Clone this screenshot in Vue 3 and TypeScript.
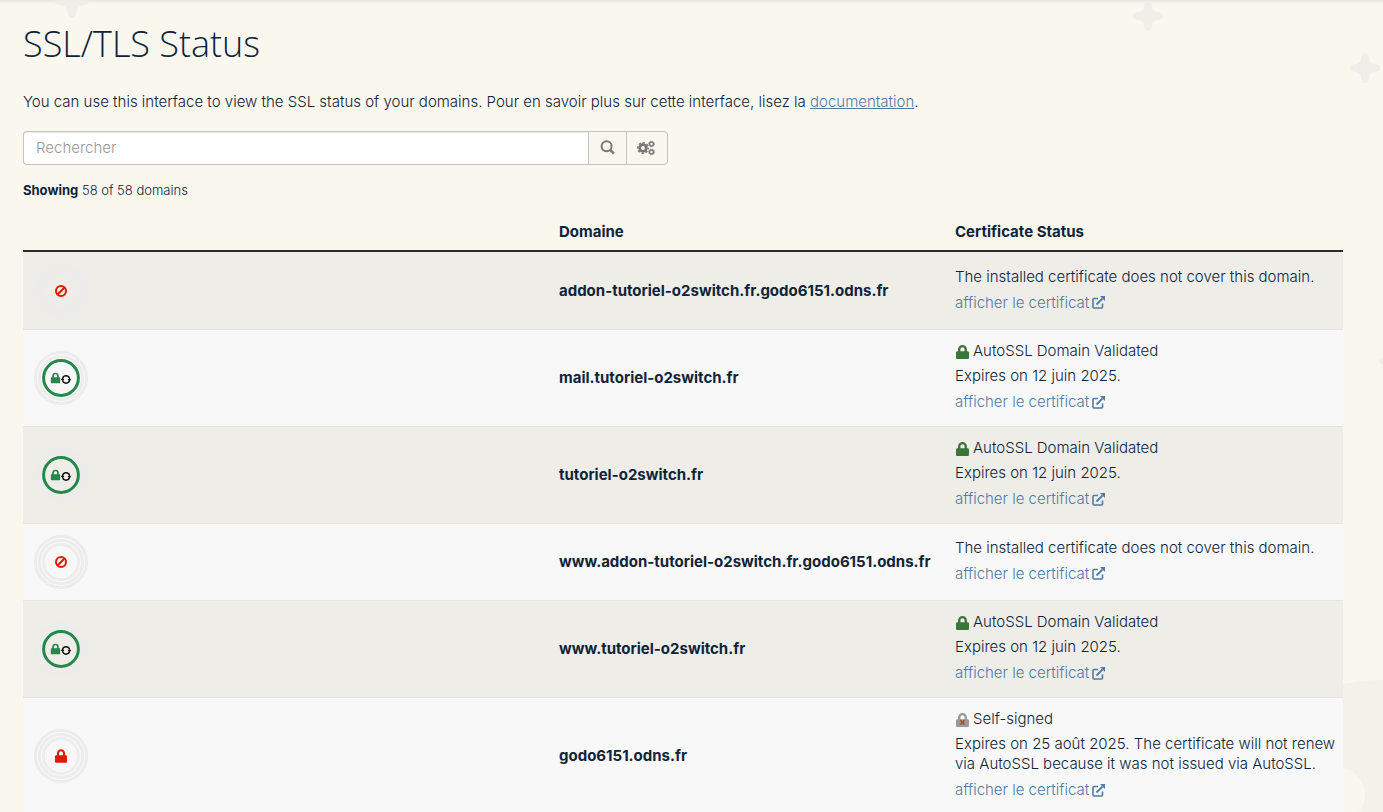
<script setup lang="ts">
import { ref } from 'vue'

type Badge = 'ban' | 'auto' | 'lock'
type Status = 'none' | 'valid' | 'self'

interface DomainRow {
  name: string
  badge: Badge
  status: Status
  title?: string
  detail: string
}

const validated = {
  badge: 'auto' as Badge,
  status: 'valid' as Status,
  title: 'AutoSSL Domain Validated',
  detail: 'Expires on 12 juin 2025.',
}
const uncovered = {
  badge: 'ban' as Badge,
  status: 'none' as Status,
  detail: 'The installed certificate does not cover this domain.',
}

const rows: DomainRow[] = [
  { name: 'addon-tutoriel-o2switch.fr.godo6151.odns.fr', ...uncovered },
  { name: 'mail.tutoriel-o2switch.fr', ...validated },
  { name: 'tutoriel-o2switch.fr', ...validated },
  { name: 'www.addon-tutoriel-o2switch.fr.godo6151.odns.fr', ...uncovered },
  { name: 'www.tutoriel-o2switch.fr', ...validated },
  {
    name: 'godo6151.odns.fr',
    badge: 'lock',
    status: 'self',
    title: 'Self-signed',
    detail:
      'Expires on 25 août 2025. The certificate will not renew via AutoSSL because it was not issued via AutoSSL.',
  },
]

const query = ref('')

const lockPath =
  'M400 224h-24v-72C376 68.2 307.8 0 224 0S72 68.2 72 152v72H48c-26.5 0-48 21.5-48 48v192c0 26.5 21.5 48 48 48h352c26.5 0 48-21.5 48-48V272c0-26.5-21.5-48-48-48zm-104 0H152v-72c0-39.7 32.3-72 72-72s72 32.3 72 72v72z'
const starPath =
  'M15 0C18 0 19 3 19 6C20 9 21 10 24 11C27 11 30 12 30 15C30 18 27 19 24 19C21 20 20 21 19 24C19 27 18 30 15 30C12 30 11 27 11 24C10 21 9 20 6 19C3 19 0 18 0 15C0 12 3 11 6 11C9 10 10 9 11 6C11 3 12 0 15 0Z'
</script>

<template>
  <div class="page">
    <div class="decor" aria-hidden="true">
      <svg class="star star-a" viewBox="0 0 30 30"><path :d="starPath" /></svg>
      <svg class="star star-b" viewBox="0 0 30 30"><path :d="starPath" /></svg>
      <svg class="star star-c" viewBox="0 0 30 30"><path :d="starPath" /></svg>
      <svg class="star star-d" viewBox="0 0 30 30"><path :d="starPath" /></svg>
      <svg class="hill" viewBox="0 0 60 134">
        <path d="M0 5Q30 0 60 0V134H0Z" fill="#f4f1ea" />
        <circle cx="-6" cy="116" r="28" fill="#faf7ef" />
      </svg>
    </div>

    <main class="content">
      <h1>SSL/TLS Status</h1>
      <p class="intro">
        You can use this interface to view the SSL status of your domains. Pour en savoir plus sur cette
        interface, lisez la <a href="#documentation">documentation</a>.
      </p>

      <form class="search" role="search" @submit.prevent>
        <input v-model="query" type="text" placeholder="Rechercher" aria-label="Rechercher" />
        <button type="submit" class="find" aria-label="Lancer la recherche">
          <svg width="16" height="16" viewBox="0 0 16 16" fill="none" stroke="#777" stroke-width="2">
            <circle cx="6.6" cy="6.2" r="5" />
            <path d="M10.2 9.8L14 13.6" stroke-width="2.4" />
          </svg>
        </button>
        <button type="button" class="options" aria-label="Options">
          <svg width="18" height="16" viewBox="0 0 18 16" fill="none" stroke="#777">
            <circle cx="6" cy="8" r="3.3" stroke-width="2.8" />
            <circle cx="6" cy="8" r="5.2" stroke-width="1.6" stroke-dasharray="2.3 1.784" stroke-dashoffset="1" />
            <circle cx="14.5" cy="4" r="2" stroke-width="1.5" />
            <circle cx="14.5" cy="4" r="2.9" stroke-width="0.7" stroke-dasharray="1.2 1.08" />
            <circle cx="14.5" cy="12" r="2" stroke-width="1.5" />
            <circle cx="14.5" cy="12" r="2.9" stroke-width="0.7" stroke-dasharray="1.2 1.08" />
          </svg>
        </button>
      </form>

      <p class="count"><strong>Showing</strong> 58 of 58 domains</p>

      <table>
        <colgroup>
          <col class="col-badge" />
          <col class="col-domain" />
          <col class="col-status" />
        </colgroup>
        <thead>
          <tr>
            <td></td>
            <th scope="col">Domaine</th>
            <th scope="col">Certificate Status</th>
          </tr>
        </thead>
        <tbody>
          <tr v-for="row in rows" :key="row.name">
            <td class="badge-cell">
              <svg class="badge" viewBox="0 0 54 54" fill="none" aria-hidden="true">
                <g stroke="#ececec" stroke-width="2.8">
                  <circle cx="27" cy="27" r="25.6" />
                  <circle cx="27" cy="27" r="21.6" />
                  <circle v-if="row.badge !== 'auto'" cx="27" cy="27" r="17.5" />
                </g>
                <template v-if="row.badge === 'auto'">
                  <circle cx="27" cy="27" r="17.4" stroke="#22884b" stroke-width="3" />
                  <svg x="16.5" y="21.5" width="10" height="11" viewBox="0 0 448 512">
                    <path :d="lockPath" fill="#22884b" />
                  </svg>
                  <g stroke="#111" stroke-width="1.4">
                    <path d="M28.5 27.8A3.6 3.6 0 0 1 35.6 27.8" />
                    <path d="M35.6 29.2A3.6 3.6 0 0 1 28.5 29.2" />
                  </g>
                  <path d="M33.6 28H37.4L35.5 30.2Z M26.6 29H30.4L28.5 26.8Z" fill="#111" />
                </template>
                <g v-else-if="row.badge === 'ban'" stroke="#e11900" stroke-width="2">
                  <circle cx="27" cy="27" r="5" />
                  <path d="M30.5 23.5L23.5 30.5" />
                </g>
                <svg v-else x="21" y="20" width="12" height="14" viewBox="0 0 448 512">
                  <path :d="lockPath" fill="#e11900" />
                </svg>
              </svg>
            </td>
            <th scope="row">{{ row.name }}</th>
            <td>
              <div class="status">
                <p v-if="row.title" class="status-title">
                  <svg class="status-lock" viewBox="0 0 14 14" aria-hidden="true">
                    <svg x="1" width="13" height="14" viewBox="0 0 448 512" preserveAspectRatio="none">
                      <path :d="lockPath" :fill="row.status === 'self' ? '#999' : '#3a753a'" />
                    </svg>
                    <path
                      v-if="row.status === 'self'"
                      d="M5.3 7L9.5 11.4M9.5 7L5.3 11.4"
                      stroke="#a34a2c"
                      stroke-width="1.4"
                    />
                  </svg>
                  <span>{{ row.title }}</span>
                </p>
                <p>{{ row.detail }}</p>
                <a href="#certificat">
                  <span>afficher le certificat</span>
                  <svg width="13" height="13" viewBox="0 0 13 13" fill="none" stroke="#4f7ba6" aria-hidden="true">
                    <path d="M6 2.5H1.9Q1 2.5 1 3.4V11Q1 12 2 12H9.6Q10.5 12 10.5 11V7.5" stroke-width="1.6" />
                    <path d="M4.5 8.5L10.5 2.5" stroke-width="1.8" />
                    <path d="M8 0H13V5Z" fill="#4f7ba6" stroke="none" />
                  </svg>
                </a>
              </div>
            </td>
          </tr>
        </tbody>
      </table>
    </main>
  </div>
</template>

<style>
body {
  margin: 0;
  background: #faf7ef;
}
</style>

<style scoped>
.page {
  position: relative;
  min-height: 100vh;
  overflow: hidden;
  box-sizing: border-box;
  background: linear-gradient(#e9e6df, #faf7ef 4px);
  color: #0f2439;
  font-family: Inter, 'Liberation Sans', sans-serif;
  font-size: 15px;
  font-weight: 300;
  line-height: 20px;
}

.decor {
  position: absolute;
  inset: 0;
  pointer-events: none;
}

.star {
  position: absolute;
  width: 30px;
  height: 30px;
  fill: #f1eee9;
}

.star-a {
  left: 55px;
  top: -16px;
  width: 34px;
  height: 34px;
}

.star-b {
  right: 220px;
  top: 1px;
}

.star-c {
  right: 3px;
  top: 53px;
}

.star-d {
  right: -26px;
  top: 346px;
}

.hill {
  position: absolute;
  right: -20px;
  top: 679px;
  width: 60px;
  height: 134px;
}

.content {
  position: relative;
  padding: 20px 40px 0 23px;
}

h1 {
  margin: 0;
  font-family: 'Open Sans', sans-serif;
  font-size: 36px;
  font-weight: 300;
  line-height: 48px;
}

p {
  margin: 0;
}

a {
  color: #4f7ba6;
}

.intro {
  margin-top: 24px;
}

.search {
  display: flex;
  width: calc(50% - 15px);
  height: 34px;
  margin-top: 19px;
}

.search input,
.search button {
  box-sizing: border-box;
  border: 1px solid #c4c3bf;
  font: inherit;
}

.search input {
  flex: 1;
  min-width: 0;
  padding: 0 12px;
  border-right: 0;
  border-radius: 4px 0 0 4px;
  background: #fff;
  color: inherit;
  box-shadow: inset 0 1px 1px rgb(0 0 0 / 8%);
}

.search input::placeholder {
  color: #999;
  opacity: 1;
}

.search button {
  display: flex;
  align-items: center;
  justify-content: center;
  padding: 0;
  background: #faf7ef;
}

.search .find {
  width: 38px;
  border-right: 0;
}

.search .options {
  width: 42px;
  padding-right: 2px;
  border-radius: 0 4px 4px 0;
}

.count {
  margin-top: 15px;
  font-size: 13px;
}

strong,
th {
  font-weight: 700;
}

table {
  width: 100%;
  margin-top: 14px;
  border-collapse: separate;
  border-spacing: 0;
  table-layout: fixed;
}

.col-badge {
  width: 40%;
}

.col-domain,
.col-status {
  width: 30%;
}

th,
td {
  padding: 11px 4px 11px 8px;
  border-top: 1px solid #e4e4e0;
  text-align: left;
  vertical-align: middle;
}

thead th,
thead td {
  padding-top: 8px;
  padding-bottom: 8px;
  border-top: 0;
  border-bottom: 2px solid #2d2d2d;
}

tbody tr:first-child > * {
  border-top-color: transparent;
}

tbody tr:nth-child(odd) {
  background: #eeede8;
}

tbody tr:nth-child(even) {
  background: #f8f8f8;
}

.badge-cell {
  padding-left: 11px;
}

.badge {
  display: block;
  width: 54px;
  height: 54px;
}

.status {
  display: flex;
  flex-direction: column;
  gap: 5px;
  padding-bottom: 2px;
}

.status-title {
  display: flex;
  align-items: center;
  gap: 4px;
}

.status-lock {
  width: 14px;
  height: 14px;
  margin-top: 2px;
}

.status a {
  display: flex;
  align-items: center;
  align-self: flex-start;
  gap: 3px;
  line-height: 22px;
  text-decoration: none;
}
</style>
